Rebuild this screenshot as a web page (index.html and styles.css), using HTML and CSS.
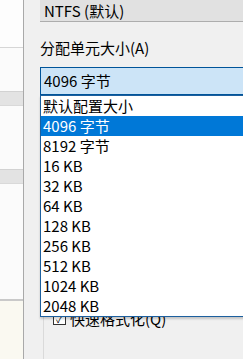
FILE: index.html
```html
<!DOCTYPE html>
<html lang="zh-CN">
<head>
  <meta charset="UTF-8">
  <title>格式化</title>
  <link rel="stylesheet" href="styles.css">
</head>
<body>
  <div class="screen">
    <aside class="side">
      <div class="side-row top"></div>
      <div class="side-row"></div>
      <div class="side-band"></div>
      <div class="side-row mid"></div>
      <div class="side-band"></div>
      <div class="side-row tall"></div>
      <div class="side-foot"></div>
    </aside>
    <main class="dialog">
      <div class="field">NTFS (默认)</div>
      <div class="caption">分配单元大小(A)</div>
      <div class="combo">
        <div class="combo-value">4096 字节</div>
        <ul class="dropdown">
          <li>默认配置大小</li>
          <li class="selected">4096 字节</li>
          <li>8192 字节</li>
          <li>16 KB</li>
          <li>32 KB</li>
          <li>64 KB</li>
          <li>128 KB</li>
          <li>256 KB</li>
          <li>512 KB</li>
          <li>1024 KB</li>
          <li>2048 KB</li>
        </ul>
      </div>
      <div class="group">
        <label class="check"><span class="box">&#10003;</span>快速格式化(Q)</label>
      </div>
    </main>
  </div>
</body>
</html>
```

FILE: styles.css
```css
body { margin: 0; width: 243px; height: 359px; overflow: hidden; background: #f0f0f0; font-family: "Noto Sans CJK SC", "Noto Sans", sans-serif; font-size: 15px; color: #000; }
.screen { display: flex; width: 243px; height: 359px; overflow: hidden; }

.side { width: 23px; flex: none; display: flex; flex-direction: column; background: #fbfbfb; border-right: 1px solid #a9a9a9; }
.side-row { height: 43px; }
.side-row.top { height: 47px; background: #fdfdfd; border-bottom: 1px solid #d6d6d6; }
.side-row.mid { height: 63px; }
.side-row.tall { height: 115px; }
.side-band { height: 13px; background: #e3e3e3; border-top: 1px solid #d2d2d2; border-bottom: 1px solid #d9d9d9; }
.side-foot { flex: 1; background: #faf9f1; border-top: 2px solid #c9c9c9; }

.dialog { flex: none; width: 260px; padding-left: 16px; position: relative; }
.field { height: 21px; line-height: 21px; padding-left: 4px; background: #e1e1e1; border-bottom: 1px solid #adadad; }
.caption { margin-top: 16px; height: 20px; line-height: 20px; }
.combo { position: relative; margin-top: 9px; z-index: 2; }
.combo-value { height: 26px; line-height: 26px; padding-left: 3px; background: #cce4f7; border: 1px solid #005499; border-right: none; }
.dropdown { position: absolute; top: 100%; left: 0; right: -10px; margin: 0; padding: 0; list-style: none; background: #fff; border: 1px solid #1c5f9e; box-shadow: 0 2px 2px rgba(0, 0, 0, 0.18); }
.dropdown li { height: 20px; line-height: 20px; padding-left: 2px; white-space: nowrap; }
.dropdown li.selected { background: #0078d7; color: #fff; }

.group { margin-top: 213px; margin-left: 3px; height: 60px; border-left: 1px solid #dadada; padding-left: 9px; }
.check { display: flex; align-items: center; gap: 4px; height: 20px; color: #000; }
.box { width: 11px; height: 11px; border: 1px solid #333; background: #fff; font-size: 10px; line-height: 11px; text-align: center; }
```
